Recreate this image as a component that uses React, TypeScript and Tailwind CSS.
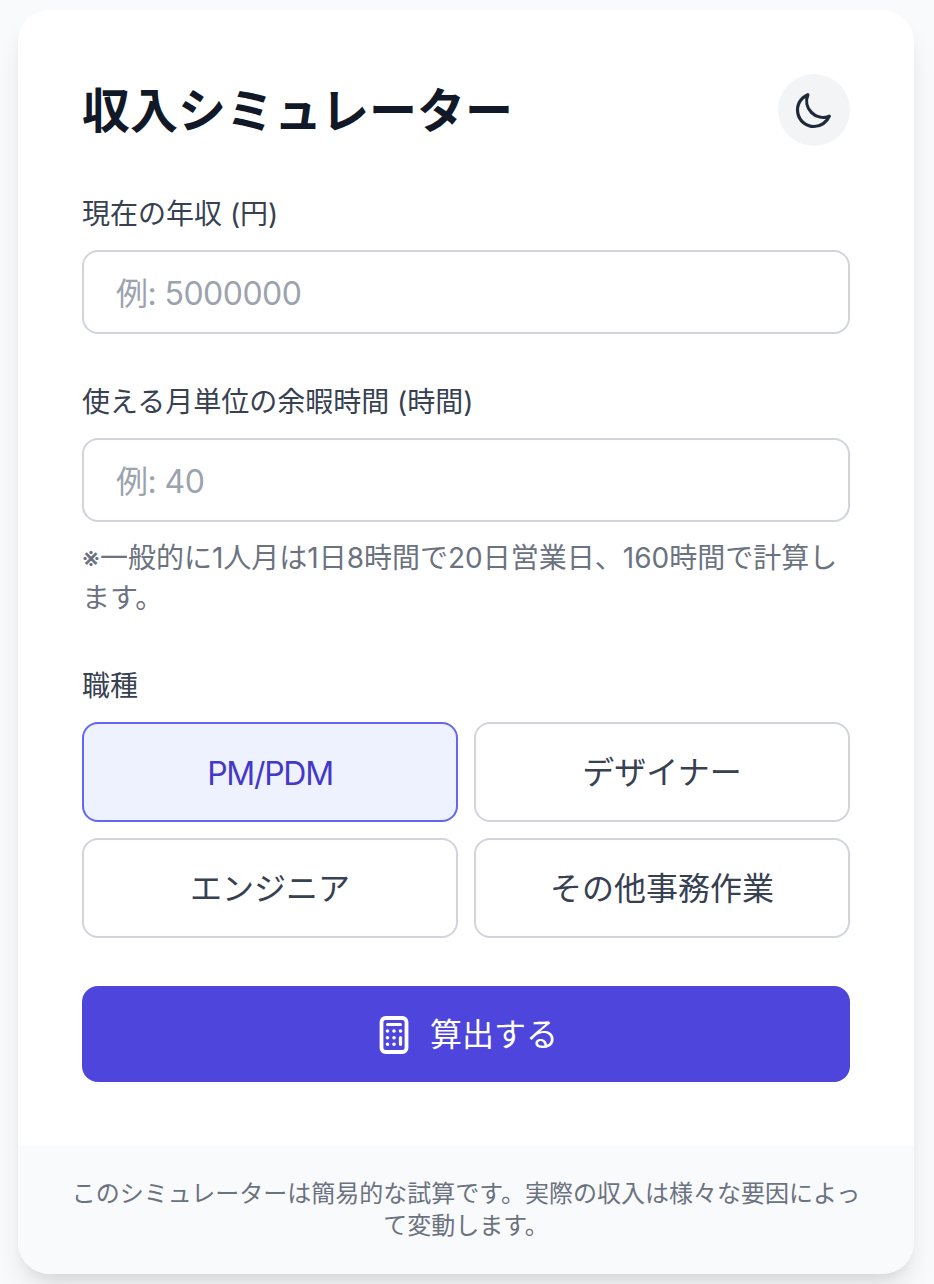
const font = "font-['Inter','Noto_Sans_CJK_JP',sans-serif]";

function Option({ label, active }: { label: string; active?: boolean }) {
  return (
    <button
      className={
        active
          ? "h-[100px] rounded-2xl border-2 border-[#6366f1] bg-[#eef2ff] pt-[4px] text-[32px] tracking-[-1.3px] text-[#4338ca]"
          : "h-[100px] rounded-2xl border-2 border-[#d1d5db] bg-white pt-[2px] text-[32px] text-[#374151]"
      }
    >
      {label}
    </button>
  );
}

function Field({ label, placeholder }: { label: string; placeholder: string }) {
  return (
    <div>
      <label className="mb-4 block text-[28px] leading-[40px] font-normal text-[#374151]">{label}</label>
      <input
        placeholder={placeholder}
        className="block h-[84px] w-full rounded-2xl border-2 border-[#d1d5db] bg-white px-8 pt-[2px] text-[32px] tracking-[-0.55px] text-[#111827] placeholder:text-[#9ca3af]"
      />
    </div>
  );
}

export default function App() {
  return (
    <div className={`${font} flex min-h-screen justify-start bg-[#f9fafb] py-[10px] pl-[18px]`}>
      <div className="w-[896px] overflow-hidden rounded-[32px] bg-white shadow-[0_20px_30px_-6px_rgba(0,0,0,0.1),0_8px_12px_-4px_rgba(0,0,0,0.06)]">
        <div className="p-16">
          <div className="mb-12 flex items-center justify-between">
            <h1 className="pt-[2px] text-[48px] leading-[64px] font-bold text-[#111827]">収入シミュレーター</h1>
            <button className="flex h-[72px] w-[72px] items-center justify-center rounded-full bg-[#f3f4f6] text-[#1f2937]">
              <svg width="44" height="44" viewBox="0 0 24 24" fill="none" stroke="currentColor" strokeWidth="1.75" strokeLinecap="round" strokeLinejoin="round">
                <path d="M20.354 15.354A9 9 0 018.646 3.646 9.003 9.003 0 0012 21a9.003 9.003 0 008.354-5.646z" />
              </svg>
            </button>
          </div>

          <div className="mb-12">
            <Field label="現在の年収 (円)" placeholder="例: 5000000" />
          </div>

          <div className="mb-12">
            <Field label="使える月単位の余暇時間 (時間)" placeholder="例: 40" />
            <p className="mt-4 text-[28px] leading-[40px] text-[#6b7280]">
              ※一般的に1人月は1日8時間で20日営業日、160時間で計算します。
            </p>
          </div>

          <div className="mb-12">
            <label className="mb-4 block text-[28px] leading-[40px] font-normal text-[#374151]">職種</label>
            <div className="grid grid-cols-2 gap-4">
              <Option label="PM/PDM" active />
              <Option label="デザイナー" />
              <Option label="エンジニア" />
              <Option label="その他事務作業" />
            </div>
          </div>

          <button className="flex h-24 w-full items-center justify-center gap-3 rounded-2xl bg-[#4d45dc] pt-[2px] pr-1 text-[32px] text-white">
            <svg width="48" height="48" viewBox="0 0 24 24" fill="none" stroke="currentColor" strokeWidth="1.9" strokeLinecap="round" strokeLinejoin="round">
              <path d="M7.75 3.5h8.5a2 2 0 012 2v13a2 2 0 01-2 2h-8.5a2 2 0 01-2-2v-13a2 2 0 012-2z" />
              <path d="M8.75 6.75h6.5" strokeWidth="1.5" />
              <path d="M15.25 13.35v3.3" strokeWidth="1.6" />
              <path d="M8.75 10h.01M12 10h.01M15.25 10h.01M8.75 13.35h.01M12 13.35h.01M8.75 16.65h.01M12 16.65h.01" strokeWidth="1.8" />
            </svg>
            算出する
          </button>
        </div>

        <div className="bg-[#f9fafb] px-12 py-8 text-center text-[24px] leading-[32px] text-[#6b7280]">
          このシミュレーターは簡易的な試算です。実際の収入は様々な要因によって変動します。
        </div>
      </div>
    </div>
  );
}
